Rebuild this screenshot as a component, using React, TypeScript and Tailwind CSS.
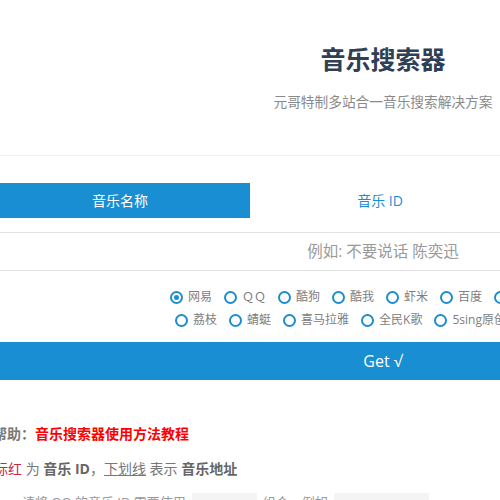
import React from "react";

const font = { fontFamily: '"Open Sans", "Noto Sans CJK SC", sans-serif' };

function Radio({ label, checked = false }: { label: string; checked?: boolean }) {
  return (
    <div className="flex items-center mr-[12px] shrink-0">
      <span className="w-[13px] h-[13px] rounded-full border-2 border-[#1c8dd0] flex items-center justify-center mr-[5px] shrink-0">
        {checked && <span className="w-[5px] h-[5px] rounded-full bg-[#1c8dd0]" />}
      </span>
      <span className="text-[12px] leading-[16px] text-[#808080]">{label}</span>
    </div>
  );
}

export default function App() {
  const row1 = ["网易", "ＱＱ", "酷狗", "酷我", "虾米", "百度", "一听"];
  const row2 = ["荔枝", "蜻蜓", "喜马拉雅", "全民K歌", "5sing原创", "5sing翻唱"];
  return (
    <div className="w-[500px] h-[500px] overflow-hidden bg-white" style={font}>
      <div className="w-[766px] h-[156px] border-b border-[#f0f0f0] flex flex-col items-center pt-[41px]">
        <div className="text-[25px] leading-[36px] font-bold text-[#2f4055]">音乐搜索器</div>
        <div className="mt-[14px] text-[13.7px] leading-[22px] text-[#8a8a8a]">元哥特制多站合一音乐搜索解决方案</div>
      </div>

      <div className="ml-[-10px] w-[520px] mt-[27px] grid grid-cols-2 h-[35px]">
        <div className="bg-[#1a8ed2] text-white text-[14px] flex items-center justify-center">音乐名称</div>
        <div className="text-[#1a8ed2] text-[14px] flex items-center justify-center">音乐 ID</div>
      </div>

      <div className="mt-[14px] w-[766px] h-[39px] border-y border-[#e2e2e2] flex items-center justify-center text-[15.5px] text-[#9a9a9a]">
        例如: 不要说话 陈奕迅
      </div>

      <div className="pt-[18px] flex flex-col gap-[7px] whitespace-nowrap">
        <div className="flex pl-[170px]">
          {row1.map((l, i) => (
            <Radio key={l} label={l} checked={i === 0} />
          ))}
        </div>
        <div className="flex pl-[175px]">
          {row2.map((l) => (
            <Radio key={l} label={l} />
          ))}
        </div>
      </div>

      <div className="mt-[14px] h-[38px] w-[766px] bg-[#1a8ed2] text-white text-[16px] flex items-center justify-center">
        Get √
      </div>

      <div className="ml-[-7px] mt-[43px] text-[14px] leading-[22px] whitespace-nowrap">
        <span className="font-bold text-[#777]">帮助：</span>
        <span className="font-bold text-[#ff0000]">音乐搜索器使用方法教程</span>
      </div>

      <div className="ml-[-6px] mt-[13px] text-[14px] leading-[22px] whitespace-nowrap text-[#777]">
        <span className="text-[#c7254e]">标红</span> 为 <b className="text-[#666]">音乐 ID</b>，<span className="underline">下划线</span> 表示{" "}
        <b className="text-[#666]">音乐地址</b>
      </div>

      <div className="ml-[22px] mt-[12px] text-[13px] leading-[20px] whitespace-nowrap text-[#999] flex items-center">
        <span>请将 QQ 的音乐 ID 需要使用</span>
        <span className="ml-[6px] mr-[6px] inline-block w-[65px] h-[18px] bg-[#f4f4f4]" />
        <span>组合，例如</span>
        <span className="ml-[6px] inline-block w-[95px] h-[18px] bg-[#f4f4f4]" />
      </div>
    </div>
  );
}
